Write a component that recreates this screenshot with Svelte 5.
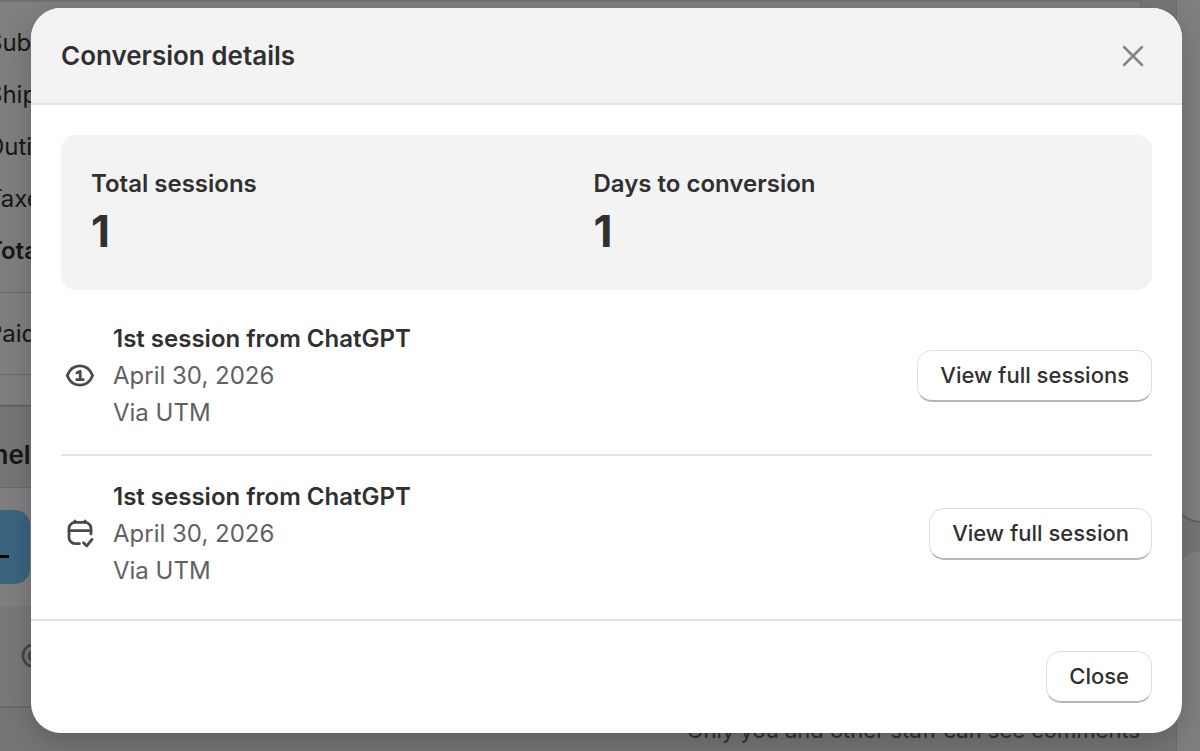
<script>
    let open = $state(true);

    const summary = [
        { label: "Total sessions", value: 1 },
        { label: "Days to conversion", value: 1 },
    ];

    const sessions = [
        {
            icon: "first",
            title: "1st session from ChatGPT",
            date: "April 30, 2026",
            via: "Via UTM",
            action: "View full sessions",
        },
        {
            icon: "calendar",
            title: "1st session from ChatGPT",
            date: "April 30, 2026",
            via: "Via UTM",
            action: "View full session",
        },
    ];

    const totals = ["Subtotal", "Shipping", "Duties", "Taxes"];

    const close = () => {
        open = false;
    };
</script>

<div class="app">
    <div class="page" inert={open}>
        <div class="main-column">
            <section class="card totals">
                <div class="inner-edge"></div>
                {#each totals as label (label)}
                    <div class="total-row">{label}</div>
                {/each}
                <div class="total-row strong">Total</div>
                <div class="paid">Paid</div>
            </section>
            <h2>Timeline</h2>
            <section class="composer">
                <div class="composer-top">
                    <div class="avatar"><span></span></div>
                </div>
                <div class="toolbar">
                    <svg viewBox="0 0 28 28" width="28" height="28" aria-hidden="true">
                        <circle cx="14" cy="14" r="5" />
                        <path d="M19 9v7c0 4 6 4 6-2A11 11 0 1 0 20 23" />
                    </svg>
                </div>
            </section>
            <p class="note">Only you and other staff can see comments</p>
        </div>
        <div class="side-column">
            <div class="card side-top"></div>
            <div class="card side-bottom"></div>
        </div>
    </div>

    {#if open}
        <div class="backdrop">
            <div class="modal" role="dialog" aria-modal="true" aria-labelledby="modal-title">
                <header>
                    <h1 id="modal-title">Conversion details</h1>
                    <button class="dismiss" aria-label="Dismiss" onclick={close}>
                        <svg viewBox="0 0 36 36" width="36" height="36" aria-hidden="true">
                            <path d="M8 9l18 18M26 9L8 27" />
                        </svg>
                    </button>
                </header>

                <div class="body">
                    <dl class="summary">
                        {#each summary as item (item.label)}
                            <div>
                                <dt>{item.label}</dt>
                                <dd>{item.value}</dd>
                            </div>
                        {/each}
                    </dl>

                    <ul class="sessions">
                        {#each sessions as session (session.icon)}
                            <li>
                                <svg class="icon" viewBox="0 0 36 36" width="36" height="36" aria-hidden="true">
                                    {#if session.icon === "first"}
                                        <path d="M6.200 17.500C8.400 12 12.800 7.900 18.900 7.900S29.400 12 31.600 17.500C29.400 23 25 27.100 18.900 27.100S8.400 23 6.200 17.500z" />
                                        <path d="M16 14.800l3.200-1.500v8.200M15.800 21.700h6.400" />
                                    {:else}
                                        <path d="M18.500 27.600H14A6 6 0 0 1 8 21.600V12.400A6 6 0 0 1 14 6.400H24A6 6 0 0 1 30 12.400v5.500" />
                                        <path d="M8 14.700H30M13.500 6.400L14 5M24.500 6.400L24 5M22.500 26.700l3.300 3.200 5.200-6.500" />
                                    {/if}
                                </svg>
                                <div class="text">
                                    <h3>{session.title}</h3>
                                    <p>{session.date}</p>
                                    <p>{session.via}</p>
                                </div>
                                <button class="button">{session.action}</button>
                            </li>
                        {/each}
                    </ul>
                </div>

                <footer>
                    <button class="button" onclick={close}>Close</button>
                </footer>
            </div>
        </div>
    {/if}
</div>

<style>
    :global(body) {
        background: #ececec;
    }

    .app {
        position: relative;
        height: 100vh;
        overflow: hidden;
        font-family: Inter, "Liberation Sans", sans-serif;
        font-size: 24px;
        line-height: 37px;
        color: #303030;
    }

    h1,
    h2,
    h3,
    p,
    dl,
    dd,
    ul {
        margin: 0;
        padding: 0;
    }

    button {
        font: inherit;
        color: inherit;
        cursor: pointer;
    }

    /* order page */
    .page {
        display: flex;
        gap: 37px;
        height: 100%;
        margin-left: -39px;
    }

    .main-column {
        flex: 1;
    }

    .card {
        background: #fff;
        box-shadow: 0 1px 2px #a0a0a0;
    }

    .totals {
        padding-bottom: 30px;
        border-radius: 0 0 22px 22px;
    }

    .inner-edge {
        height: 15px;
        border-top: 2px solid #e3e3e3;
    }

    .total-row {
        height: 52px;
        line-height: 52px;
        padding-left: 26px;
    }

    .strong {
        font-weight: 600;
    }

    .paid {
        margin-top: 15px;
        padding: 22px 26px;
        border-top: 1px solid #d4d4d4;
        border-bottom: 1px solid #d4d4d4;
    }

    h2 {
        padding: 31px 0 14px;
        font-size: 26px;
        font-weight: 600;
    }

    .composer {
        background: #fff;
        border-top: 1px solid #d4d4d4;
        border-bottom: 2px solid #d4d4d4;
    }

    .composer-top {
        padding: 22px 0;
    }

    .avatar {
        display: flex;
        align-items: flex-end;
        box-sizing: border-box;
        width: 69px;
        height: 74px;
        padding: 0 21px 26px;
        border-radius: 0 15px 15px 0;
        background: #77c8ff;
    }

    .avatar span {
        flex: 1;
        height: 3px;
        background: #000;
    }

    .toolbar {
        padding: 36px 59px;
        background: #f3f3f3;
    }

    svg {
        display: block;
        flex-shrink: 0;
        fill: none;
        stroke: #4a4a4a;
        stroke-width: 2.8;
        stroke-linecap: round;
        stroke-linejoin: round;
    }

    .toolbar svg {
        stroke: #8a8a8a;
    }

    .note {
        padding-top: 4px;
        font-size: 22px;
        text-align: right;
        color: #616161;
    }

    .side-column {
        display: flex;
        flex-direction: column;
        gap: 30px;
        width: 23px;
    }

    .side-top {
        height: 521px;
        border-radius: 0 0 0 22px;
    }

    .side-bottom {
        flex: 1;
        border-radius: 22px 0 0 0;
    }

    /* dialog */
    .backdrop {
        position: absolute;
        inset: 0;
        box-sizing: border-box;
        padding: 8px 18px 19px 31px;
        background: rgb(0 0 0 / 50%);
    }

    .modal {
        border-radius: 30px;
        background: #fff;
        box-shadow: 0 10px 30px rgb(0 0 0 / 20%);
        overflow: hidden;
    }

    header {
        display: flex;
        align-items: center;
        justify-content: space-between;
        padding: 30px 30px 29px;
        border-bottom: 2px solid #e3e3e3;
        background: #f3f3f3;
    }

    h1 {
        font-size: 26px;
        font-weight: 600;
        line-height: 36px;
    }

    .dismiss {
        padding: 0;
        border: none;
        background: none;
    }

    .dismiss svg {
        stroke: #858585;
        stroke-width: 2.5;
    }

    .body {
        padding: 30px;
    }

    .summary {
        display: grid;
        grid-template-columns: 1fr 1fr;
        padding: 30px 56px 30px 30px;
        border-radius: 15px;
        background: #f3f3f3;
    }

    dt {
        font-weight: 600;
    }

    dd {
        font-size: 44px;
        font-weight: 700;
        line-height: 58px;
    }

    .sessions {
        list-style: none;
        padding-top: 30px;
    }

    li {
        display: flex;
        align-items: center;
        gap: 16px;
    }

    li + li {
        margin-top: 23px;
        padding-top: 22px;
        border-top: 2px solid #e3e3e3;
    }

    .text {
        flex: 1;
        color: #616161;
    }

    h3 {
        font-size: 24px;
        font-weight: 600;
        color: #303030;
    }

    .button {
        padding: 6px 22px;
        border: 1px solid #dedede;
        border-bottom: 2px solid #b5b5b5;
        border-radius: 15px;
        background: #fff;
        font-size: 22px;
        font-weight: 550;
        white-space: nowrap;
    }

    footer {
        display: flex;
        justify-content: flex-end;
        padding: 30px;
        border-top: 2px solid #e3e3e3;
    }
</style>
